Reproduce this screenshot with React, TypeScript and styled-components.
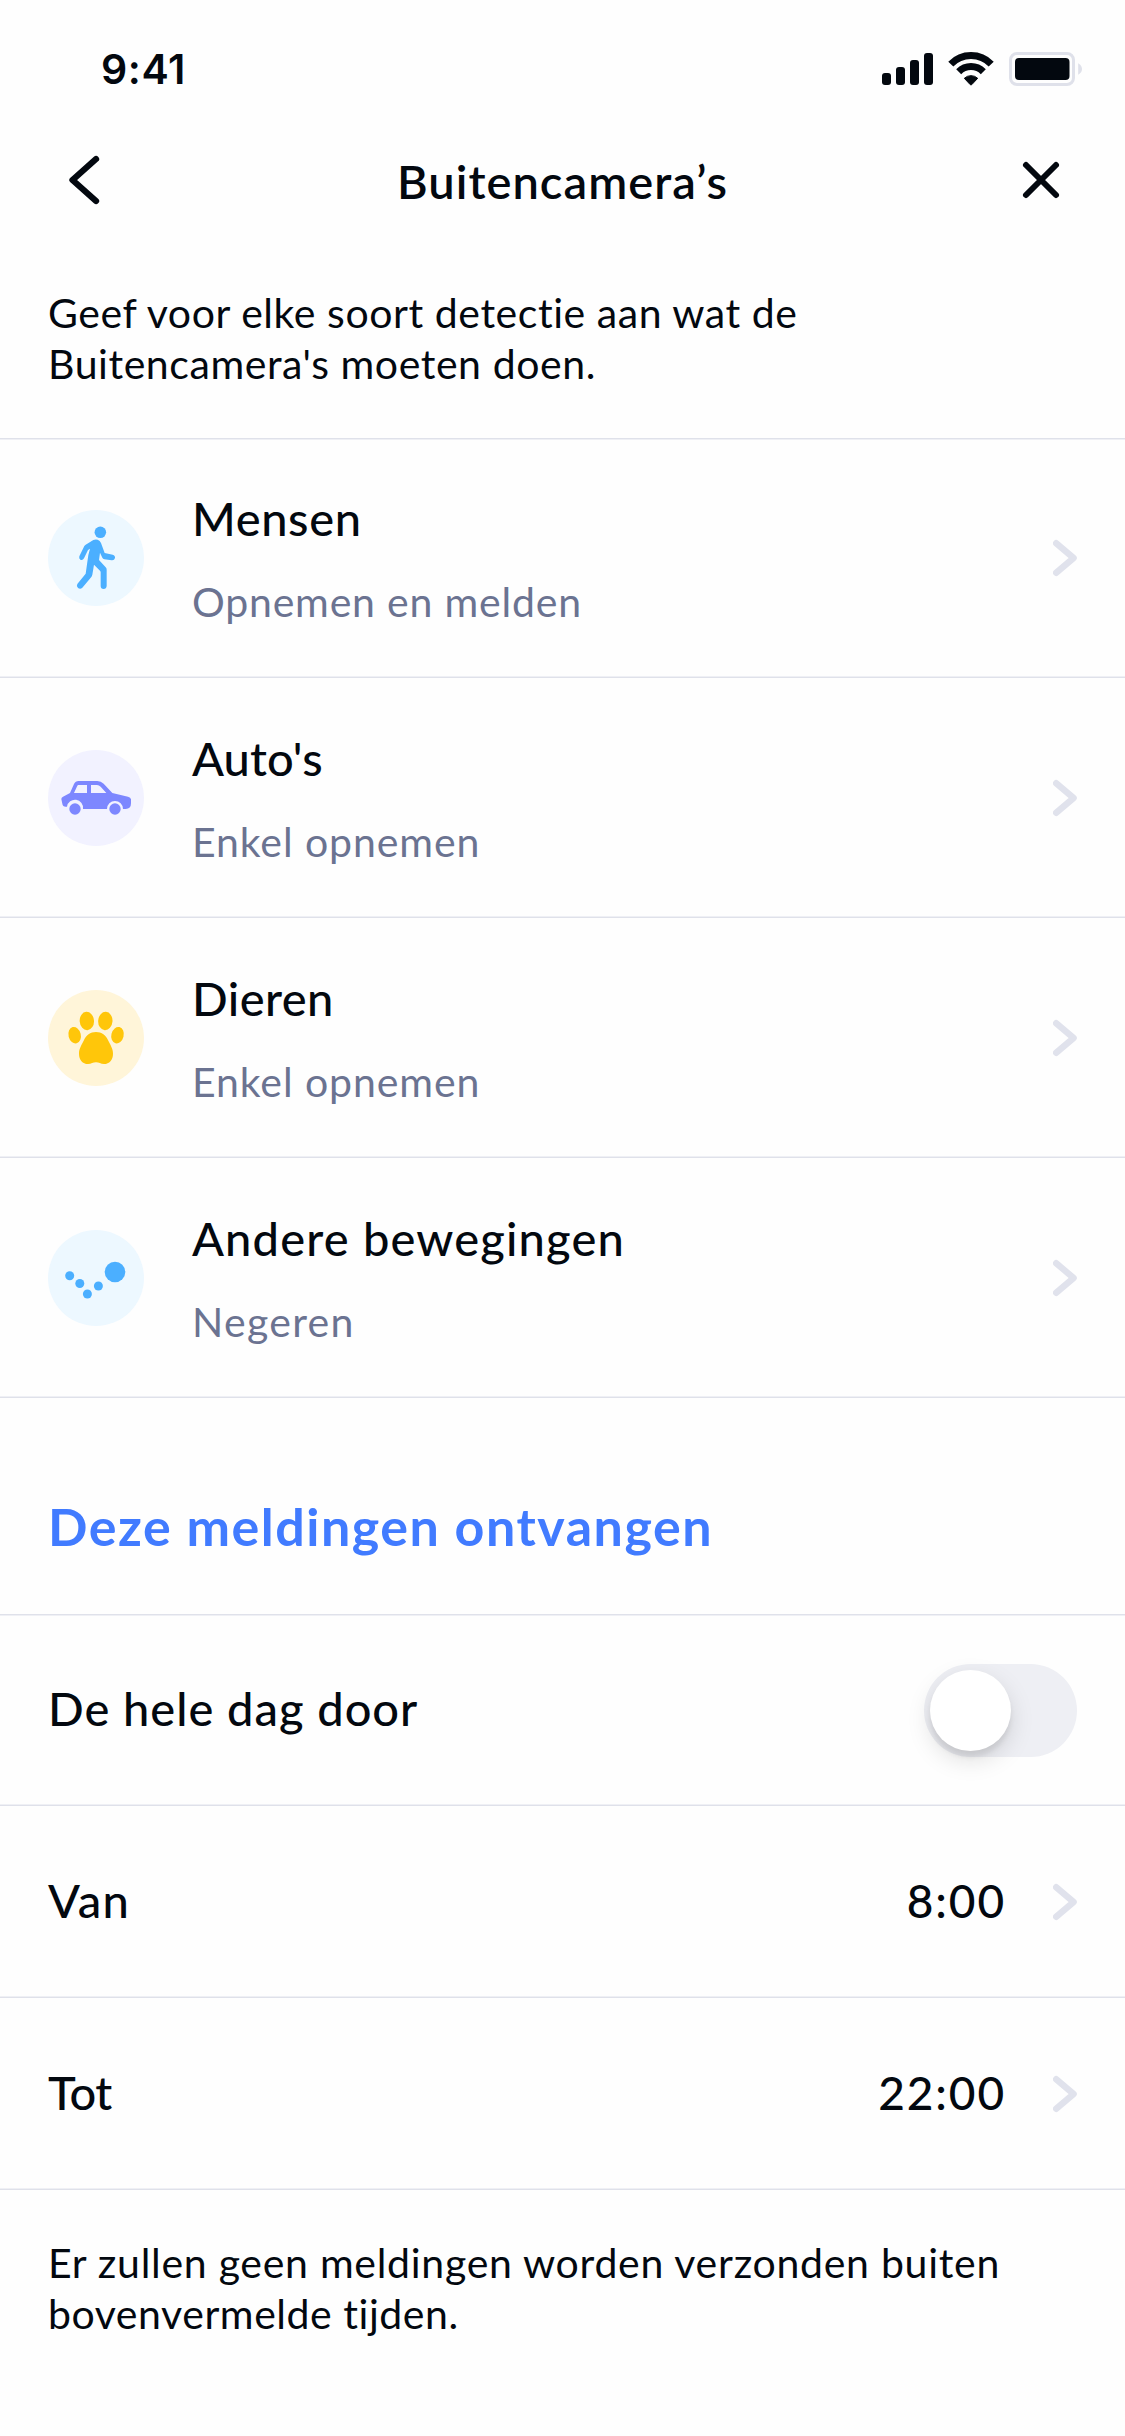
import React, { useState } from "react";
import styled, { createGlobalStyle } from "styled-components";

const color = {
  ink: "#03080f",
  muted: "#6b7391",
  accent: "#417bff",
  lineDark: "#dfe1ea",
  lineLight: "#eff0f5",
  chevron: "#e0e2ec",
  track: "#eeeff4",
};

const GlobalStyle = createGlobalStyle`
  *, *::before, *::after { box-sizing: border-box; }
  body { margin: 0; background: #fefefe; }
  button { border: 0; padding: 0; background: none; font: inherit; color: inherit; cursor: pointer; }
  svg { display: block; }
`;

const Screen = styled.main`
  display: flex;
  flex-direction: column;
  width: 1125px;
  height: 2436px;
  overflow: hidden;
  background: #fefefe;
  color: ${color.ink};
  font-family: Lato, "Open Sans", sans-serif;
`;

const StatusBar = styled.div`
  display: flex;
  align-items: center;
  justify-content: space-between;
  height: 138px;
  padding: 0 41px 0 101px;
`;

const Clock = styled.span`
  font: 600 41px/50px Inter, sans-serif;
  letter-spacing: 0.6px;
`;

const NavBar = styled.header`
  display: grid;
  grid-template-columns: 120px 1fr 120px;
  align-items: center;
  height: 84px;
`;

const NavButton = styled.button<{ $side: "left" | "right" }>`
  display: flex;
  justify-content: ${(p) => (p.$side === "left" ? "flex-start" : "flex-end")};
  padding: ${(p) => (p.$side === "left" ? "0 0 0 66px" : "0 63px 0 0")};
`;

const Title = styled.h1`
  margin: 0;
  padding-top: 1px;
  text-align: center;
  font-size: 47px;
  font-weight: 600;
  line-height: 60px;
  letter-spacing: 1.05px;
`;

const Note = styled.p<{ $top: number; $bottom: number }>`
  margin: 0;
  padding: ${(p) => `${p.$top}px 48px ${p.$bottom}px`};
  font-size: 41px;
  line-height: 51px;
`;

const NoteLine = styled.span<{ $spacing: number }>`
  display: block;
  white-space: nowrap;
  letter-spacing: ${(p) => p.$spacing}px;
`;

const Group = styled.section`
  background: linear-gradient(${color.lineDark} 1px, ${color.lineLight} 1px) top / 100% 2px no-repeat;
`;

const Row = styled.div<{ $height: number }>`
  display: flex;
  align-items: center;
  height: ${(p) => p.$height}px;
  padding: 0 48px;
  background: linear-gradient(${color.lineLight} 1px, ${color.lineDark} 1px) bottom / 100% 2px no-repeat;
`;

const Badge = styled.div<{ $bg: string; $fg: string }>`
  flex: none;
  width: 96px;
  height: 96px;
  margin-right: 48px;
  border-radius: 50%;
  background: ${(p) => p.$bg};
  color: ${(p) => p.$fg};
`;

const RowText = styled.div`
  flex: 1;
  display: flex;
  flex-direction: column;
  gap: 29px;
  padding-bottom: 1px;
`;

const Label = styled.span<{ $spacing: number }>`
  font-size: 47px;
  font-weight: 500;
  line-height: 60px;
  letter-spacing: ${(p) => p.$spacing}px;
`;

const SubLabel = styled.span<{ $spacing: number }>`
  color: ${color.muted};
  font-size: 41px;
  line-height: 50px;
  letter-spacing: ${(p) => p.$spacing}px;
`;

const SettingLabel = styled(Label)`
  flex: 1;
  padding-bottom: 4px;
`;

const TimeValue = styled(Label)`
  margin-right: 47px;
  padding-bottom: 3px;
  font-size: 46px;
`;

const SectionHeading = styled.h2`
  height: 216px;
  margin: 0;
  padding: 98px 48px 0;
  color: ${color.accent};
  font-size: 52px;
  font-weight: 700;
  line-height: 60px;
  letter-spacing: 1.52px;
`;

const Track = styled.button<{ $on: boolean }>`
  display: flex;
  align-items: center;
  justify-content: ${(p) => (p.$on ? "flex-end" : "flex-start")};
  width: 153px;
  height: 93px;
  padding: 0 6px;
  border-radius: 47px;
  background: ${(p) => (p.$on ? color.accent : color.track)};
`;

const Knob = styled.span`
  width: 81px;
  height: 81px;
  border-radius: 50%;
  background: #fff;
  box-shadow: 0 9px 24px rgba(0, 0, 0, 0.13), 0 6px 5px rgba(0, 0, 0, 0.07);
`;

const StatusIcons = () => (
  <svg width="204" height="42" viewBox="880 48 204 42" fill={color.ink}>
    <rect x="882" y="73" width="9" height="12" rx="3" />
    <rect x="896" y="67" width="9" height="18" rx="3" />
    <rect x="910" y="60" width="9" height="25" rx="3" />
    <rect x="924" y="53" width="9" height="32" rx="3" />
    <g fill="none" stroke={color.ink} strokeWidth="7">
      <path d="M950.8 64.1A28 28 0 0 1 991.2 64.1" />
      <path d="M958.7 71.7A17.2 17.2 0 0 1 983.3 71.7" />
    </g>
    <path d="M964.3 78.3A9.8 9.8 0 0 1 977.7 78.3L971.8 84.6Q971 85.4 970.2 84.6Z" stroke={color.ink} strokeWidth="1" strokeLinejoin="round" />
    <rect x="1010.5" y="53.5" width="63" height="31" rx="6.5" fill="none" stroke={color.lineDark} strokeWidth="3" />
    <rect x="1015" y="58" width="54.5" height="22" rx="4" />
    <path d="M1078.2 63.2Q1082 65.5 1082 69T1078.2 74.8Z" fill={color.lineDark} />
  </svg>
);

const BackIcon = () => (
  <svg width="36" height="54" viewBox="66 153 36 54" fill="none" stroke={color.ink} strokeWidth="6.3" strokeLinecap="round" strokeLinejoin="round">
    <path d="M96 159L72.5 180L96 201" />
  </svg>
);

const CloseIcon = () => (
  <svg width="42" height="42" viewBox="1020 159 42 42" fill="none" stroke={color.ink} strokeWidth="6" strokeLinecap="round">
    <path d="M1026 165L1056 195M1056 165L1026 195" />
  </svg>
);

const ChevronIcon = () => (
  <svg width="24" height="38" viewBox="0 0 24 38" fill="none" stroke={color.chevron} strokeWidth="6.4" strokeLinecap="round" strokeLinejoin="round">
    <path d="M3.2 4.2L20.6 19L3.2 33.8" />
  </svg>
);

const WalkIcon = () => (
  <svg width="96" height="96" viewBox="24 30 288 288" fill="currentColor">
    <circle cx="181" cy="97" r="17.3" />
    <path d="M133 138Q134 136 137 134L160 120Q166 117 173 119Q180 122 183 129L194 159L218 164Q226 166 225 174Q223 182 215 181L193 178Q189 177 187 173L180 158L177 180L197 202Q200 205 200 209V258Q199 267 191 267Q182 267 182 258V217Q182 214 180 212L162 194L157 224Q156 228 154 231L127 263Q121 269 114 264Q108 259 112 252L137 221L145 165L150 146L144 150L132 175Q128 182 121 179Q116 176 118 169Z" />
  </svg>
);

const CarIcon = () => (
  <svg width="96" height="96" viewBox="54 90 288 288" fill="currentColor">
    <path fillRule="evenodd" d="M94 237Q94 232 99 230L120 219L132 192Q136 183 146 183H202Q213 183 221 191L247 219L294 230Q302 232 303 238V250Q303 267 287 267H279A24 24 0 0 0 231 267H159A24 24 0 0 0 111 260H107Q98 260 97 251ZM145 195Q143 195 142 197L132 219H171V195ZM183 195V219H229L212 200Q207 195 201 195Z" />
    <circle cx="135" cy="267" r="17" />
    <circle cx="255" cy="267" r="17" />
  </svg>
);

const PawIcon = () => (
  <svg width="96" height="96" viewBox="54 90 288 288" fill="currentColor">
    <ellipse cx="170.5" cy="183" rx="21.5" ry="27.5" transform="rotate(-4 170.5 183)" />
    <ellipse cx="226" cy="183" rx="21.5" ry="27.5" transform="rotate(4 226 183)" />
    <ellipse cx="134" cy="225.5" rx="18.5" ry="25" transform="rotate(-14 134 225.5)" />
    <ellipse cx="262.5" cy="225.5" rx="18.5" ry="25" transform="rotate(14 262.5 225.5)" />
    <path d="M198 216C215 216 228 226 235 242C241 255 249 265 249 281C249 300 238 312 222 312C212 312 207 307 198 307C189 307 184 312 174 312C158 312 147 300 147 281C147 265 155 255 161 242C168 226 181 216 198 216Z" />
  </svg>
);

const MotionIcon = () => (
  <svg width="96" height="96" viewBox="0 0 96 96" fill="currentColor">
    <circle cx="21.7" cy="45.7" r="4.5" />
    <circle cx="31.8" cy="53.5" r="4.5" />
    <circle cx="39.4" cy="64" r="4.5" />
    <circle cx="50.4" cy="56" r="4.5" />
    <circle cx="67" cy="42" r="10.3" />
  </svg>
);

const detections = [
  { label: "Mensen", ls: 0.61, action: "Opnemen en melden", als: 0.8, bg: "#edf8ff", fg: "#4bafff", icon: <WalkIcon /> },
  { label: "Auto's", ls: 0.12, action: "Enkel opnemen", als: 0.91, bg: "#f2f2ff", fg: "#7d87ff", icon: <CarIcon /> },
  { label: "Dieren", ls: 0.45, action: "Enkel opnemen", als: 0.91, bg: "#fff5d9", fg: "#ffc60a", icon: <PawIcon /> },
  { label: "Andere bewegingen", ls: 1.18, action: "Negeren", als: 1.3, bg: "#edf8ff", fg: "#4bafff", icon: <MotionIcon /> },
];

const times = [
  { label: "Van", ls: 1.3, value: "8:00", vls: 1.9 },
  { label: "Tot", ls: -0.6, value: "22:00", vls: 1.9 },
];

export default function App() {
  const [allDay, setAllDay] = useState(false);
  return (
    <Screen>
      <GlobalStyle />
      <StatusBar>
        <Clock>9:41</Clock>
        <StatusIcons />
      </StatusBar>
      <NavBar>
        <NavButton $side="left" aria-label="Terug"><BackIcon /></NavButton>
        <Title>Buitencamera’s</Title>
        <NavButton $side="right" aria-label="Sluiten"><CloseIcon /></NavButton>
      </NavBar>
      <Note $top={65} $bottom={49}>
        <NoteLine $spacing={0.56}>Geef voor elke soort detectie aan wat de</NoteLine>
        <NoteLine $spacing={0.57}>Buitencamera's moeten doen.</NoteLine>
      </Note>
      <Group>
        {detections.map((d) => (
          <Row key={d.label} $height={240}>
            <Badge $bg={d.bg} $fg={d.fg}>{d.icon}</Badge>
            <RowText>
              <Label $spacing={d.ls}>{d.label}</Label>
              <SubLabel $spacing={d.als}>{d.action}</SubLabel>
            </RowText>
            <ChevronIcon />
          </Row>
        ))}
      </Group>
      <SectionHeading>Deze meldingen ontvangen</SectionHeading>
      <Group>
        <Row $height={192}>
          <SettingLabel $spacing={0.97}>De hele dag door</SettingLabel>
          <Track $on={allDay} role="switch" aria-checked={allDay} aria-label="De hele dag door" onClick={() => setAllDay(!allDay)}>
            <Knob />
          </Track>
        </Row>
        {times.map((t) => (
          <Row key={t.label} $height={192}>
            <SettingLabel $spacing={t.ls}>{t.label}</SettingLabel>
            <TimeValue $spacing={t.vls}>{t.value}</TimeValue>
            <ChevronIcon />
          </Row>
        ))}
      </Group>
      <Note $top={47} $bottom={0}>
        <NoteLine $spacing={0.72}>Er zullen geen meldingen worden verzonden buiten</NoteLine>
        <NoteLine $spacing={0.55}>bovenvermelde tijden.</NoteLine>
      </Note>
    </Screen>
  );
}
